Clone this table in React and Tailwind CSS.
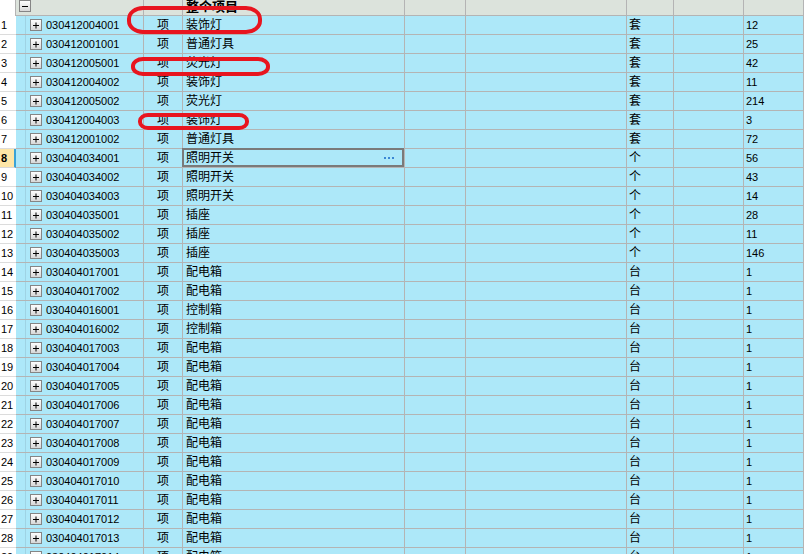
import React from "react";

const rows = [
  ["030412004001", "装饰灯", "套", "12"],
  ["030412001001", "普通灯具", "套", "25"],
  ["030412005001", "荧光灯", "套", "42"],
  ["030412004002", "装饰灯", "套", "11"],
  ["030412005002", "荧光灯", "套", "214"],
  ["030412004003", "装饰灯", "套", "3"],
  ["030412001002", "普通灯具", "套", "72"],
  ["030404034001", "照明开关", "个", "56"],
  ["030404034002", "照明开关", "个", "43"],
  ["030404034003", "照明开关", "个", "14"],
  ["030404035001", "插座", "个", "28"],
  ["030404035002", "插座", "个", "11"],
  ["030404035003", "插座", "个", "146"],
  ["030404017001", "配电箱", "台", "1"],
  ["030404017002", "配电箱", "台", "1"],
  ["030404016001", "控制箱", "台", "1"],
  ["030404016002", "控制箱", "台", "1"],
  ["030404017003", "配电箱", "台", "1"],
  ["030404017004", "配电箱", "台", "1"],
  ["030404017005", "配电箱", "台", "1"],
  ["030404017006", "配电箱", "台", "1"],
  ["030404017007", "配电箱", "台", "1"],
  ["030404017008", "配电箱", "台", "1"],
  ["030404017009", "配电箱", "台", "1"],
  ["030404017010", "配电箱", "台", "1"],
  ["030404017011", "配电箱", "台", "1"],
  ["030404017012", "配电箱", "台", "1"],
  ["030404017013", "配电箱", "台", "1"],
  ["030404017014", "配电箱", "台", "1"],
];

const line = "border-r border-b border-[#b4b4b4]";

const ToggleBox = ({ plus }) => (
  <svg width="12" height="12" viewBox="0 0 12 12" className="shrink-0">
    <defs>
      <linearGradient id={plus ? "gp" : "gm"} x1="0" y1="0" x2="0" y2="1">
        <stop offset="0" stopColor="#ffffff" />
        <stop offset="1" stopColor="#d6d6d6" />
      </linearGradient>
    </defs>
    <rect x="0.5" y="0.5" width="11" height="11" fill={`url(#${plus ? "gp" : "gm"})`} stroke="#858585" />
    <path d="M3 6.5h6" stroke="#000" strokeWidth="1" />
    {plus && <path d="M6 3.5v6" stroke="#000" strokeWidth="1" />}
  </svg>
);

const Row = ({ n, r }) => {
  const sel = n === 8;
  return (
    <div className="flex h-[19px]">
      <div
        className={`w-[16px] shrink-0 border-b pl-[1px] text-[11px] leading-[18px] ${
          sel ? "bg-[#fde6a7] font-bold border-r-2 border-r-[#3aa3d6] border-b-[#d8d8d8]" : "bg-white border-[#dcdcdc]"
        }`}
      >
        {n}
      </div>
      <div className={`relative w-[128px] shrink-0 flex items-center ${line}`}>
        <div className="absolute left-[9px] top-0 bottom-0 w-px bg-[#9fd3e4]" />
        <div className="ml-[14px]">
          <ToggleBox plus />
        </div>
        <span className="ml-[4px] text-[11px]">{r[0]}</span>
      </div>
      <div className={`w-[39px] shrink-0 flex items-center justify-center text-[12px] ${line}`}>项</div>
      <div className={`relative w-[222px] shrink-0 flex items-center pl-[3px] text-[12px] ${line}`}>
        {r[1]}
        {sel && (
          <div className="absolute -left-px -top-px right-0 bottom-0 border-2 border-[#7a7a7a] flex items-center justify-end pr-[8px]">
            <div className="flex gap-[2px]">
              <span className="w-[2px] h-[2px] bg-[#3a87d4]" />
              <span className="w-[2px] h-[2px] bg-[#3a87d4]" />
              <span className="w-[2px] h-[2px] bg-[#3a87d4]" />
            </div>
          </div>
        )}
      </div>
      <div className={`w-[61px] shrink-0 ${line}`} />
      <div className={`w-[161px] shrink-0 ${line}`} />
      <div className={`w-[47px] shrink-0 flex items-center pl-[2px] text-[12px] ${line}`}>{r[2]}</div>
      <div className={`w-[70px] shrink-0 ${line}`} />
      <div className={`flex-1 flex items-center pl-[2px] text-[11px] ${line}`}>{r[3]}</div>
    </div>
  );
};

export default function App() {
  return (
    <div className="relative w-[804px] h-[554px] overflow-hidden bg-[#ade8f9] text-black font-['Liberation_Sans','Noto_Sans_CJK_SC',sans-serif]">
      {/* header */}
      <div className="flex h-[16px] bg-[#dce3dc]">
        <div className="w-[16px] shrink-0 bg-white border-r border-[#b4b4b4]" />
        <div className={`w-[128px] shrink-0 flex items-start pl-[3px] ${line}`}>
          <ToggleBox />
        </div>
        <div className={`w-[39px] shrink-0 ${line}`} />
        <div className={`w-[222px] shrink-0 pl-[3px] overflow-hidden ${line}`}>
          <span className="block text-[13px] font-bold leading-[13px]">整个项目</span>
        </div>
        <div className={`w-[61px] shrink-0 ${line}`} />
        <div className={`w-[161px] shrink-0 ${line}`} />
        <div className={`w-[47px] shrink-0 ${line}`} />
        <div className={`w-[70px] shrink-0 ${line}`} />
        <div className={`flex-1 ${line}`} />
      </div>

      {rows.map((r, i) => (
        <Row key={i} n={i + 1} r={r} />
      ))}

      {/* red annotation marks */}
      <svg className="absolute inset-0 pointer-events-none" width="804" height="554">
        <g fill="none" stroke="#e8151f" strokeWidth="4">
          <rect x="129" y="8" width="131" height="24" rx="14" ry="11" />
          <rect x="133" y="59" width="135" height="15" rx="10" ry="7" />
          <rect x="140" y="115" width="107" height="13" rx="8" ry="6" />
        </g>
      </svg>
    </div>
  );
}
